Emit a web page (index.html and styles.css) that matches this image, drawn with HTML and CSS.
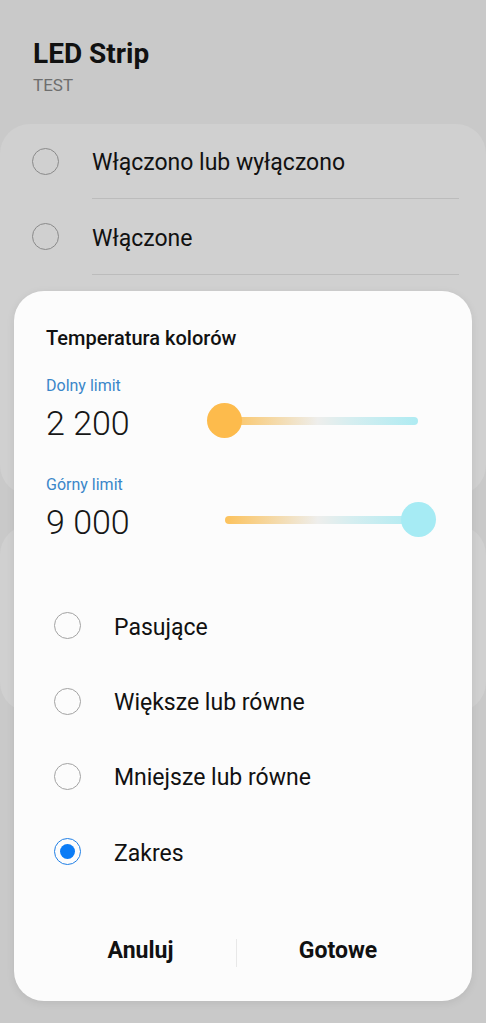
FILE: index.html
```html
<!DOCTYPE html>
<html lang="pl">
<head>
    <meta charset="UTF-8">
    <meta name="viewport" content="width=device-width, initial-scale=1.0">
    <title>LED Strip</title>
    <link rel="stylesheet" href="styles.css">
</head>
<body>
<div class="screen">
    <div class="header">
        <div class="device-name">LED Strip</div>
        <div class="device-room">TEST</div>
    </div>

    <!-- Condition list behind the dialog -->
    <div class="card card-main">
        <div class="row">
            <span class="radio"></span>
            <span class="row-text">Włączono lub wyłączono</span>
        </div>
        <div class="divider"></div>
        <div class="row">
            <span class="radio"></span>
            <span class="row-text">Włączone</span>
        </div>
        <div class="divider"></div>
    </div>
    <div class="card card-second"></div>

    <!-- Colour temperature dialog -->
    <div class="dialog">
        <div class="dialog-title">Temperatura kolorów</div>

        <div class="limit">
            <div class="limit-label">Dolny limit</div>
            <div class="limit-row">
                <div class="limit-value">2 200</div>
                <div class="slider">
                    <div class="track"></div>
                    <div class="thumb thumb-warm" style="left: 0%;"></div>
                </div>
            </div>
        </div>

        <div class="limit">
            <div class="limit-label">Górny limit</div>
            <div class="limit-row">
                <div class="limit-value">9 000</div>
                <div class="slider">
                    <div class="track"></div>
                    <div class="thumb thumb-cool" style="left: 100%;"></div>
                </div>
            </div>
        </div>

        <div class="options">
            <div class="option">
                <span class="radio radio-light"></span>
                <span class="option-text">Pasujące</span>
            </div>
            <div class="option">
                <span class="radio radio-light"></span>
                <span class="option-text">Większe lub równe</span>
            </div>
            <div class="option">
                <span class="radio radio-light"></span>
                <span class="option-text">Mniejsze lub równe</span>
            </div>
            <div class="option">
                <span class="radio radio-checked"></span>
                <span class="option-text">Zakres</span>
            </div>
        </div>

        <div class="buttons">
            <div class="btn">Anuluj</div>
            <div class="btn-sep"></div>
            <div class="btn">Gotowe</div>
        </div>
    </div>
</div>
</body>
</html>
```

FILE: styles.css
```css
body {
    margin: 0;
    padding: 0;
    background-color: #c9c9c9;
    font-family: Roboto, "Noto Sans", sans-serif;
    color: #111;
}
.screen {
    position: relative;
    width: 486px;
    height: 1023px;
    overflow: hidden;
}
.header {
    padding: 37px 0 0 33px;
}
.device-name {
    font-size: 28px;
    line-height: 34px;
    font-weight: 700;
    color: #111;
}
.device-room {
    margin-top: 3px;
    font-size: 17px;
    line-height: 22px;
    color: #6e6e6e;
}
.card {
    background: #d0d0d0;
    border-radius: 30px;
}
.card-main {
    margin-top: 28px;
    height: 371px;
}
.card-second {
    margin-top: 30px;
    height: 187px;
}
.row {
    display: flex;
    align-items: center;
    height: 74px;
    padding-left: 32px;
}
.row + .divider + .row {
    height: 75px;
}
.row-text {
    margin-left: 33px;
    padding-top: 3px;
    font-size: 23px;
}
.divider {
    height: 1px;
    margin: 0 27px 0 92px;
    background: #bcbcbc;
}
.radio {
    box-sizing: border-box;
    width: 27px;
    height: 27px;
    border: 1.5px solid #8a8a8a;
    border-radius: 50%;
    flex-shrink: 0;
}
.radio-light {
    border-color: #a3a3a3;
}
.radio-checked {
    border: 1.5px solid #1f7fe6;
    position: relative;
}
.radio-checked::after {
    content: "";
    position: absolute;
    left: 4.5px;
    top: 4.5px;
    width: 15px;
    height: 15px;
    border-radius: 50%;
    background: #0b7cf6;
}

/* dialog */
.dialog {
    position: absolute;
    left: 14px;
    top: 291px;
    width: 458px;
    height: 710px;
    box-sizing: border-box;
    padding-top: 35px;
    background: #fcfcfc;
    border-radius: 30px;
    box-shadow: 0 2px 8px rgba(0, 0, 0, 0.08);
}
.dialog-title {
    padding-left: 32px;
    font-size: 20px;
    line-height: 24px;
    font-weight: 500;
}
.limit {
    padding-left: 32px;
    margin-top: 26px;
}
.limit + .limit {
    margin-top: 32px;
}
.limit-label {
    font-size: 16px;
    line-height: 20px;
    color: #3a86c9;
}
.limit-row {
    display: flex;
    align-items: center;
    margin-top: 7px;
    height: 40px;
}
.limit-value {
    width: 161px;
    font-size: 34px;
    line-height: 40px;
    font-weight: 300;
    color: #161616;
}
.slider {
    position: relative;
    width: 229px;
    height: 35px;
    margin-bottom: 5px;
}
.track {
    position: absolute;
    left: 18px;
    right: 18px;
    top: 13.5px;
    height: 8px;
    border-radius: 4px;
    background: linear-gradient(to right, #fcc25c 0%, #f5d9a6 25%, #eeeeec 48%, #d6eef0 65%, #aeebf2 100%);
}
.thumb {
    position: absolute;
    top: 0;
    width: 35px;
    height: 35px;
    margin-left: 0;
    border-radius: 50%;
}
.thumb-warm {
    background: #fdbb4c;
}
.thumb-cool {
    background: #a6ebf4;
    margin-left: -35px;
}
.options {
    margin-top: 46px;
}
.option {
    display: flex;
    align-items: center;
    height: 75.4px;
    padding-left: 40px;
}
.option-text {
    margin-left: 33px;
    padding-top: 3px;
    font-size: 23px;
}
.buttons {
    display: grid;
    grid-template-columns: 191px 1px 202px;
    align-items: center;
    margin-top: 33px;
    height: 56px;
    padding-left: 31px;
}
.btn {
    text-align: center;
    font-size: 23px;
    line-height: 56px;
    font-weight: 700;
    color: #111;
}
.btn-sep {
    width: 1px;
    height: 28px;
    margin-top: 4px;
    background: #e8e8e8;
}
```
